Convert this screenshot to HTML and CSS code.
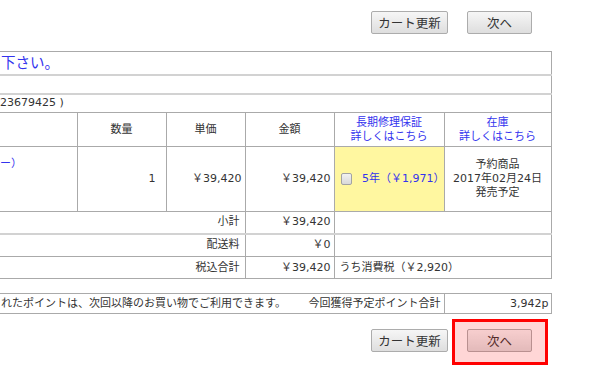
FILE: index.html
```html
<!DOCTYPE html>
<html lang="ja">
<head>
  <meta charset="UTF-8">
  <meta name="viewport" content="width=device-width, initial-scale=1.0">
  <title>ショッピングカート</title>
  <link rel="stylesheet" href="styles.css">
</head>
<body>
  <div class="page">
    <div class="actions">
      <button type="button" class="btn btn-update">カート更新</button>
      <button type="button" class="btn btn-next">次へ</button>
    </div>

    <table class="cart">
      <colgroup>
        <col class="col-name">
        <col class="col-qty">
        <col class="col-price">
        <col class="col-amount">
        <col class="col-warranty">
        <col class="col-stock">
      </colgroup>
      <tr class="row-notice">
        <td colspan="6" class="notice">下さい。</td>
      </tr>
      <tr class="row-blank">
        <td colspan="6"></td>
      </tr>
      <tr class="row-code">
        <td colspan="6" class="code">23679425 )</td>
      </tr>
      <tr class="row-head">
        <th></th>
        <th>数量</th>
        <th>単価</th>
        <th>金額</th>
        <th><a href="#">長期修理保証<br>詳しくはこちら</a></th>
        <th><a href="#">在庫<br>詳しくはこちら</a></th>
      </tr>
      <tr class="row-item">
        <td class="item-name"><a href="#">ー）</a></td>
        <td class="num qty">1</td>
        <td class="num">￥39,420</td>
        <td class="num">￥39,420</td>
        <td class="warranty">
          <label class="warranty-option">
            <input type="checkbox" class="check">
            <span>5年（￥1,971）</span>
          </label>
        </td>
        <td class="stock">予約商品<br>2017年02月24日<br>発売予定</td>
      </tr>
      <tr class="row-sum">
        <td colspan="3" class="label">小計</td>
        <td class="num">￥39,420</td>
        <td colspan="2"></td>
      </tr>
      <tr class="row-sum row-shipping">
        <td colspan="3" class="label">配送料</td>
        <td class="num">￥0</td>
        <td colspan="2"></td>
      </tr>
      <tr class="row-sum">
        <td colspan="3" class="label">税込合計</td>
        <td class="num">￥39,420</td>
        <td colspan="2" class="tax">うち消費税（￥2,920）</td>
      </tr>
    </table>

    <table class="points">
      <colgroup>
        <col class="col-note">
        <col class="col-point-label">
        <col class="col-point-value">
      </colgroup>
      <tr>
        <td class="point-note">れたポイントは、次回以降のお買い物でご利用できます。</td>
        <td class="point-label">今回獲得予定ポイント合計</td>
        <td class="point-value">3,942p</td>
      </tr>
    </table>

    <div class="actions actions-bottom">
      <button type="button" class="btn btn-update">カート更新</button>
      <span class="highlight">
        <button type="button" class="btn btn-next">次へ</button>
      </span>
    </div>
  </div>
</body>
</html>
```

FILE: styles.css
```css
/* Base */
:root {
  --text-color: #333;
  --link-color: #3333ee;
  --line-color: #aaa;
  --line-light: #d2d2d2;
  --warranty-bg: #fff7a0;
}

* {
  box-sizing: border-box;
}

body {
  margin: 0;
  background: #fff;
  color: var(--text-color);
  font-family: "DejaVu Sans", "Noto Sans CJK JP", sans-serif;
  font-size: 11px;
  line-height: 14px;
}

a {
  color: var(--link-color);
  text-decoration: none;
}

/* The window shows the right part of the cart page */
.page {
  width: 551px;
  padding-bottom: 30px;
}

/* Buttons */
.actions {
  display: flex;
  justify-content: flex-end;
  gap: 19px;
  padding: 11px 19px 0 0;
}

.actions-bottom {
  padding-top: 15px;
}

.btn {
  height: 23px;
  padding: 0;
  border: 1px solid #acacac;
  border-radius: 2px;
  background: linear-gradient(#f6f6f6, #dedede);
  color: var(--text-color);
  font-family: "Noto Sans CJK JP", sans-serif;
  font-size: 12.5px;
  line-height: 21px;
  cursor: pointer;
}

.btn-update {
  width: 77px;
}

.btn-next {
  width: 65px;
}

.highlight {
  position: relative;
  display: flex;
}

.highlight::after {
  content: "";
  position: absolute;
  top: -10px;
  left: -15px;
  right: -16px;
  bottom: -13px;
  border: 3px solid #f00;
  background: rgba(255, 0, 0, 0.16);
  pointer-events: none;
}

/* Cart table */
.cart,
.points {
  width: 551px;
  table-layout: fixed;
  border-collapse: collapse;
}

.cart {
  margin-top: 17px;
}

.cart td,
.cart th,
.points td {
  padding: 0 4px;
  border: 1px solid var(--line-color);
}

.cart tr > :first-child,
.points tr > :first-child {
  border-left: none;
}

.col-name { width: 77px; }
.col-qty { width: 89px; }
.col-price { width: 79px; }
.col-amount { width: 89px; }
.col-warranty { width: 110px; }
.col-stock { width: 107px; }

.row-notice { height: 23px; }
.row-blank { height: 19px; }
.row-code { height: 19px; }
.row-head { height: 34px; }
.row-item { height: 65px; }
.row-sum { height: 22px; }
.row-shipping { height: 23px; }

.row-notice td,
.row-blank td {
  border-bottom: 2px solid var(--line-light);
}

.cart .notice {
  padding-left: 1px;
  color: var(--link-color);
  font-size: 14.5px;
}

.cart .code {
  padding-left: 0;
}

.row-head th {
  font-weight: normal;
  text-align: center;
}

.cart .item-name {
  vertical-align: top;
  padding: 10px 0 0 0;
}

.num {
  text-align: right;
}

.cart .num {
  padding-right: 3px;
}

.cart .qty {
  padding-right: 10px;
}

.cart .warranty {
  background: var(--warranty-bg);
  padding-left: 6px;
}

.warranty-option {
  display: flex;
  align-items: center;
  gap: 10px;
  color: var(--link-color);
}

.check {
  appearance: none;
  width: 12px;
  height: 12px;
  margin: 0;
  border: 1px solid #a3a3a3;
  border-radius: 2px;
  background: linear-gradient(#f2f2f2, #d9d9d9);
}

.stock {
  text-align: center;
}

.row-sum .label {
  text-align: right;
}

.cart .row-sum .label {
  padding-right: 5px;
}

.row-shipping td {
  border-top: 2px solid var(--line-light);
}

.cart .tax {
  padding-left: 5px;
}

/* Points */
.points {
  margin-top: 14px;
}

.points tr {
  height: 20px;
}

.col-note { width: 303px; }
.col-point-label { width: 141px; }
.col-point-value { width: 107px; }

.points .point-note {
  padding-left: 1px;
  border-right: none;
}

.points .point-label {
  text-align: right;
  padding-right: 3px;
  border-left: none;
}

.points .point-value {
  text-align: right;
  padding-right: 2px;
}
```
